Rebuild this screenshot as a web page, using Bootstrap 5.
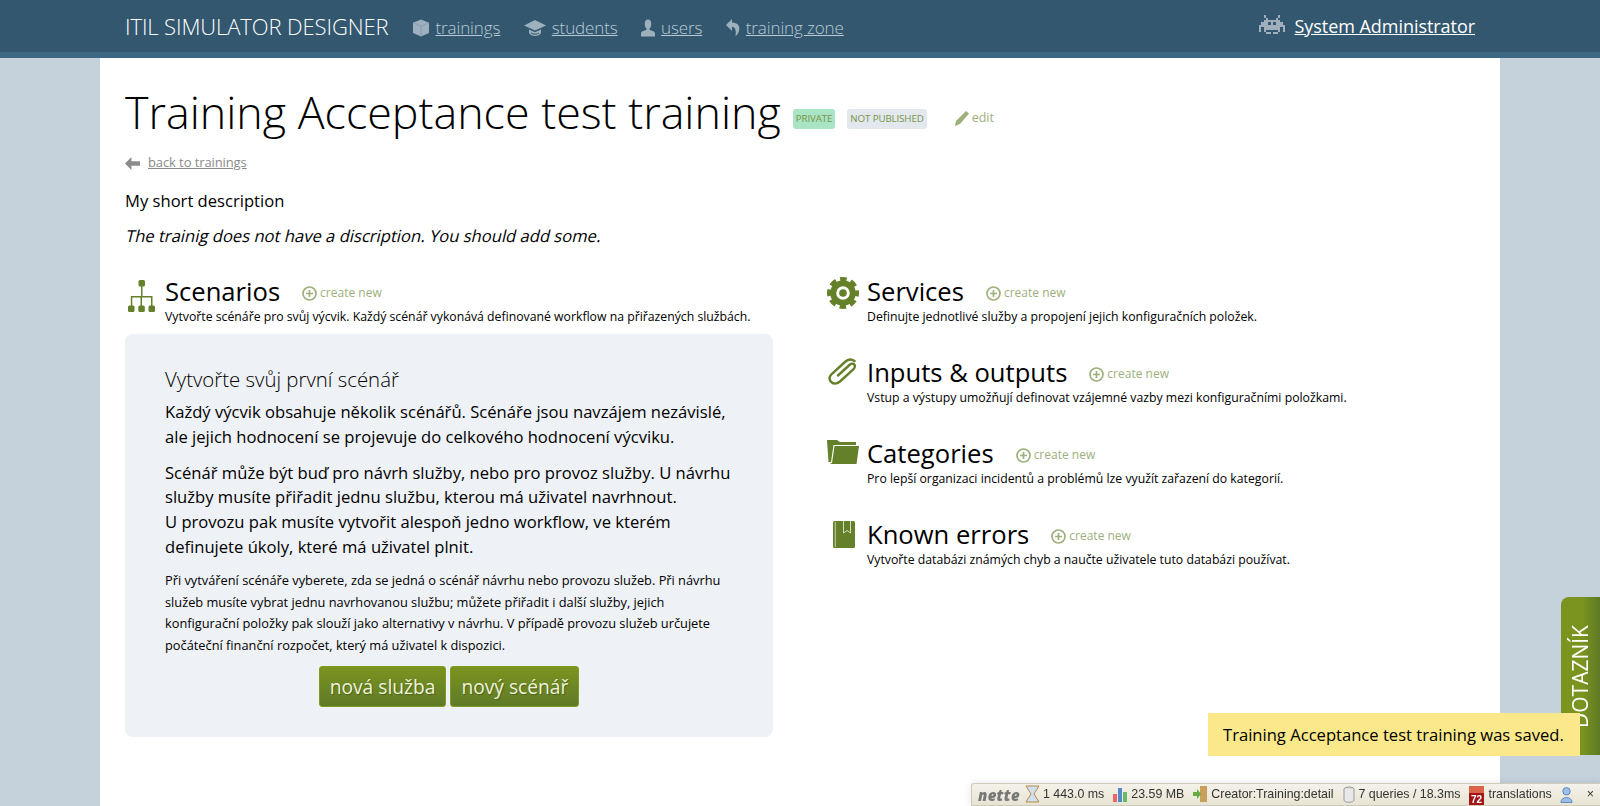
<!DOCTYPE html>
<html lang="en">
<head>
<meta charset="utf-8">
<title>ITIL Simulator Designer</title>
<link href="https://cdn.jsdelivr.net/npm/bootstrap@5.3.0/dist/css/bootstrap.min.css" rel="stylesheet">
<style>
html,body{height:100%}
body{background:#c5d1db;font-family:"Open Sans",sans-serif;color:#000;overflow:hidden}
.topbar{background:#33576e;border-bottom:6px solid #3d6883;height:58px;padding:0 125px}
.brand-name{font-weight:300;font-size:22px;color:#fff;margin-right:23px;line-height:52px;letter-spacing:-.1px}
.top-link{font-weight:300;font-size:17px;color:#b9cad6;margin-right:23.500px;letter-spacing:-.12px;display:flex;align-items:center;gap:6px;position:relative;top:2px}
.top-link a{color:#b9cad6}
.top-link svg{fill:#9db0bd}
.user-link{font-weight:400;font-size:18px;color:#fff;display:flex;align-items:center;gap:10px;letter-spacing:-.05px}
.user-link a{color:#fff}
.sheet{width:1400px;margin:0 auto;background:#fff;padding:0 25px;height:748px}
.title-row{height:85px;padding-top:22px}
.page-title{font-weight:300;font-size:44.800px;line-height:63px;margin:0}
.state-tag{font-size:9.800px;line-height:20px;height:20px;padding:0 3px;border-radius:3px;color:#7a9448;letter-spacing:-.15px;white-space:nowrap;margin-top:14px}
.tag-private{background:#a9e5c4;margin-left:12px}
.tag-draft{background:#e2e8ee;margin-left:12px}
.edit-link{color:#9db07c;font-size:12.500px;margin-left:28px;display:flex;align-items:center;gap:3px;margin-top:14px}
.back-row{font-size:13px;color:#8b8b8b;height:18px;margin-top:11px;font-weight:400}
.back-row a{color:#8b8b8b;letter-spacing:-.1px}
.short-desc{font-size:16.600px;margin-top:17px;line-height:24px;margin-bottom:0}
.long-desc{font-size:16.600px;margin-top:11px;line-height:24px;margin-bottom:0}
.slant-text{display:inline-block;transform:skewX(-13deg);transform-origin:0 75%}
.cols{margin-top:27px;display:grid;grid-template-columns:648px 1fr;column-gap:53px}
.sect{display:flex;position:relative;padding-left:40px;height:81px}
.sect-wide{padding-left:41px}
.sect-auto{height:auto}
.sect-ico{position:absolute;fill:#648028}
.ico-tree{left:3px;top:5px;width:27px;height:32px}
.ico-gear{left:1px;top:2px;width:32px;height:32px}
.ico-clip{left:2px;top:2px;width:29px;height:27px}
.ico-folder{left:1px;top:3px;width:32px;height:24px}
.ico-book{left:7px;top:3px;width:22px;height:27px}
.sect-head{display:flex;align-items:center;height:32px}
.sect-head h2{font-size:25.600px;font-weight:400;margin:0;line-height:32px;position:relative;top:1px}
.create-link{color:#9db07c;font-size:12px;display:flex;align-items:center;gap:3px;margin-left:22px;position:relative;top:2px}
.sect-note{font-size:12.250px;line-height:16px;margin:2px 0 0}
.intro-box{background:#eef1f5;border-radius:8px;padding:32px 40px 0;height:403px;margin-top:9px}
.intro-box h3{font-size:20.400px;font-weight:300;line-height:26px;margin:0 0 8px}
.intro-big{font-size:16.600px;line-height:24.800px;margin:0 0 11px}
.intro-small{font-size:12.800px;line-height:21.800px;margin:-1px 0 9px}
.btn-olive{background:linear-gradient(#7b9420,#5f7a28);border:1px solid #7f9a1d;border-radius:3px;color:#eef3d8;font-size:19.200px;line-height:25px;padding:7px 10px;font-weight:400;text-shadow:1px 1px 1px rgba(0,0,0,.25)}
.btn-olive:hover{color:#fff;background:#5f7a28}
.dotaz{position:fixed;left:1561px;top:597px;width:39px;height:158px;background:linear-gradient(90deg,#7b931f,#7b931f 55%,#5e7a26);border-radius:8px 0 0 0;overflow:hidden}
.dotaz span{position:absolute;left:0;top:30px;height:101px;width:39px;color:#fff;font-size:21px;writing-mode:vertical-rl;transform:rotate(180deg);line-height:39px;white-space:nowrap}
.flash-note{position:fixed;left:1208px;top:713px;width:372px;height:43px;background:#fbe88a;font-size:16.600px;line-height:43px;padding-left:15px;white-space:nowrap}
.debug-bar{position:fixed;left:971px;top:783px;right:0;height:23px;background:linear-gradient(#f4f2e9,#e8e4d4);border:1px solid #cfcbbb;border-right:0;border-radius:3px 0 0 0;box-shadow:0 0 8px rgba(0,0,0,.1);font-family:"Liberation Sans",sans-serif;font-size:12.400px;color:#333;display:flex;align-items:center;white-space:nowrap;padding-left:6px}
.nette-mark{font:italic 800 15px "Open Sans",sans-serif;color:#777;width:47px;letter-spacing:.3px}
.dbg-item{display:flex;align-items:center;gap:3px;margin-right:8px}
.dbg-gap{margin-right:14px}
</style>
</head>
<body>
<nav class="topbar d-flex align-items-center justify-content-between">
  <div class="d-flex align-items-center">
    <span class="brand-name">ITIL SIMULATOR DESIGNER</span>
    <span class="top-link"><svg width="18" height="18" viewBox="0 0 18 18"><path d="M9 .5l8 3.200v10.300l-8 3.500-8-3.500V3.700z"/><path d="M1 3.700l8 3.600 8-3.600M9 7.300v10" fill="none" stroke="#7f97a7" stroke-width=".7"/></svg><a href="#">trainings</a></span>
    <span class="top-link"><svg width="22" height="17" viewBox="0 0 22 17"><path d="M11 0L0 5.500l11 5 11-5zM5 9.500v3.500c2 4 10 4 12 0V9.500l-6 2.800z"/><path d="M7 13c2 1.500 6 1.500 8 0" fill="none" stroke="#33576e" stroke-width="1"/></svg><a href="#">students</a></span>
    <span class="top-link"><svg width="14" height="18" viewBox="0 0 15 18"><path d="M7.500 0C5 0 4 2 4 5c0 2 1 4 2 4.800V11C4 12 0 12.500 0 15v3h15v-3c0-2.500-4-3-6-4V9.800c1-.8 2-2.800 2-4.800 0-3-1-5-3.500-5z"/></svg><a href="#">users</a></span>
    <span class="top-link"><svg width="14" height="18" viewBox="0 0 14 18"><path d="M6 0L0 6l6 6V8c3 0 4.500 2.500 3.500 9.500C13 14 14 10.500 13 7.500 12 4.500 9 3.500 6 3.500z"/></svg><a href="#">training zone</a></span>
  </div>
  <span class="user-link"><svg width="26" height="22" viewBox="0 0 11 9" fill="#9fb0bc" shape-rendering="crispEdges"><path d="M2 0h1v1h1v1h3V1h1V0h1v1H8v1h1v1h1v1h1v3h-1V5H9v2H8v1H6V7h2V6H3v1h2v1H3V7H2V5H1v2H0V4h1V3h1V2h1V1H2zM4 3v1h1V3zM6 3v1h1V3z" fill-rule="evenodd"/></svg><a href="#">System Administrator</a></span>
</nav>

<main class="sheet">
  <div class="title-row d-flex align-items-center">
    <h1 class="page-title">Training Acceptance test training</h1>
    <span class="state-tag tag-private">PRIVATE</span>
    <span class="state-tag tag-draft">NOT PUBLISHED</span>
    <span class="edit-link"><svg width="14" height="15" viewBox="0 0 14 15" fill="#9db07c"><path d="M11 0l3 2.500L5 13l-5 2 1-5z"/></svg>edit</span>
  </div>
  <div class="back-row d-flex align-items-center gap-1"><svg width="15" height="13" viewBox="0 0 14 12" fill="#8b8b8b" class="me-1"><path d="M6 0v4h8v4H6v4L0 6z"/></svg><a href="#">back to trainings</a></div>
  <p class="short-desc">My short description</p>
  <p class="long-desc"><span class="slant-text">The trainig does not have a discription. You should add some.</span></p>

  <div class="cols">
    <section>
      <div class="sect sect-auto">
        <svg class="sect-ico ico-tree" viewBox="0 0 27 32"><rect x="10.500" width="6.500" height="6.500" rx="1.500"/><rect x="0" y="25.500" width="6.500" height="6.500" rx="1.500"/><rect x="10.300" y="25.500" width="6.500" height="6.500" rx="1.500"/><rect x="20.500" y="25.500" width="6.500" height="6.500" rx="1.500"/><path d="M13 6h1.500v10h10v10h-1.500v-8.500h-9V26H12.500v-8.500H4.300V26H2.800V16H13z"/></svg>
        <div>
          <div class="sect-head"><h2>Scenarios</h2><a class="create-link text-decoration-none" href="#"><svg width="15" height="15" viewBox="0 0 15 15"><circle cx="7.500" cy="7.500" r="6.500" fill="none" stroke="#9db07c" stroke-width="1.700"/><path d="M7.500 4v7M4 7.500h7" stroke="#9db07c" stroke-width="1.700"/></svg>create new</a></div>
          <p class="sect-note">Vytvořte scénáře pro svůj výcvik. Každý scénář vykonává definované workflow na přiřazených službách.</p>
        </div>
      </div>
      <div class="intro-box">
        <h3>Vytvořte svůj první scénář</h3>
        <p class="intro-big">Každý výcvik obsahuje několik scénářů. Scénáře jsou navzájem nezávislé, ale jejich hodnocení se projevuje do celkového hodnocení výcviku.</p>
        <p class="intro-big">Scénář může být buď pro návrh služby, nebo pro provoz služby. U návrhu služby musíte přiřadit jednu službu, kterou má uživatel navrhnout.<br>U provozu pak musíte vytvořit alespoň jedno workflow, ve kterém definujete úkoly, které má uživatel plnit.</p>
        <p class="intro-small">Při vytváření scénáře vyberete, zda se jedná o scénář návrhu nebo provozu služeb. Při návrhu služeb musíte vybrat jednu navrhovanou službu; můžete přiřadit i další služby, jejich konfigurační položky pak slouží jako alternativy v návrhu. V případě provozu služeb určujete počáteční finanční rozpočet, který má uživatel k dispozici.</p>
        <div class="d-flex justify-content-center gap-1"><button class="btn btn-olive" type="button">nová služba</button><button class="btn btn-olive" type="button">nový scénář</button></div>
      </div>
    </section>
    <section>
      <div class="sect sect-wide">
        <svg class="sect-ico ico-gear" viewBox="0 0 32 32"><circle cx="16" cy="16" r="13.500" fill="none" stroke="#648028" stroke-width="5" stroke-dasharray="6.400 4.200" stroke-dashoffset="3.200"/><circle cx="16" cy="16" r="9.800" fill="none" stroke="#648028" stroke-width="6"/><circle cx="16" cy="16" r="3.800"/></svg>
        <div>
          <div class="sect-head"><h2>Services</h2><a class="create-link text-decoration-none" href="#"><svg width="15" height="15" viewBox="0 0 15 15"><circle cx="7.500" cy="7.500" r="6.500" fill="none" stroke="#9db07c" stroke-width="1.700"/><path d="M7.500 4v7M4 7.500h7" stroke="#9db07c" stroke-width="1.700"/></svg>create new</a></div>
          <p class="sect-note">Definujte jednotlivé služby a propojení jejich konfiguračních položek.</p>
        </div>
      </div>
      <div class="sect sect-wide">
        <svg class="sect-ico ico-clip" viewBox="0 0 29 27" fill="none"><path d="M10 17.500L22 6.500c2-1.800 4.500-.5 4.800 1 .3 1.500-.3 2.800-1.500 4L12 23.500c-3 2.500-6.500 2.500-8.800.5-2.200-2.500-2-5.500.5-8L17.500 3.500c3-2.500 6.500-2.300 9-.5" style="fill:none;stroke:#648028;stroke-width:2.400;stroke-linecap:round"/></svg>
        <div>
          <div class="sect-head"><h2>Inputs &amp; outputs</h2><a class="create-link text-decoration-none" href="#"><svg width="15" height="15" viewBox="0 0 15 15"><circle cx="7.500" cy="7.500" r="6.500" fill="none" stroke="#9db07c" stroke-width="1.700"/><path d="M7.500 4v7M4 7.500h7" stroke="#9db07c" stroke-width="1.700"/></svg>create new</a></div>
          <p class="sect-note">Vstup a výstupy umožňují definovat vzájemné vazby mezi konfiguračními položkami.</p>
        </div>
      </div>
      <div class="sect sect-wide">
        <svg class="sect-ico ico-folder" viewBox="0 0 32 24"><path d="M0 0h10l3 2h16v3H6.500L4 22H1.500z"/><path d="M7.500 6H32l-2.500 18H2.500l2.500-1z"/></svg>
        <div>
          <div class="sect-head"><h2>Categories</h2><a class="create-link text-decoration-none" href="#"><svg width="15" height="15" viewBox="0 0 15 15"><circle cx="7.500" cy="7.500" r="6.500" fill="none" stroke="#9db07c" stroke-width="1.700"/><path d="M7.500 4v7M4 7.500h7" stroke="#9db07c" stroke-width="1.700"/></svg>create new</a></div>
          <p class="sect-note">Pro lepší organizaci incidentů a problémů lze využít zařazení do kategorií.</p>
        </div>
      </div>
      <div class="sect sect-wide">
        <svg class="sect-ico ico-book" viewBox="0 0 22 27"><rect width="22" height="27" rx="1.500"/><path d="M2.300 1v25" stroke="#dfe6cf" stroke-width=".8"/><path d="M10.500 0v12l3.500-2.500 3.500 2.500V0" fill="none" stroke="#dfe6cf" stroke-width=".9"/></svg>
        <div>
          <div class="sect-head"><h2>Known errors</h2><a class="create-link text-decoration-none" href="#"><svg width="15" height="15" viewBox="0 0 15 15"><circle cx="7.500" cy="7.500" r="6.500" fill="none" stroke="#9db07c" stroke-width="1.700"/><path d="M7.500 4v7M4 7.500h7" stroke="#9db07c" stroke-width="1.700"/></svg>create new</a></div>
          <p class="sect-note">Vytvořte databázi známých chyb a naučte uživatele tuto databázi používat.</p>
        </div>
      </div>
    </section>
  </div>
</main>

<a class="dotaz text-decoration-none" href="#"><span>DOTAZNÍK</span></a>
<div class="flash-note">Training Acceptance test training was saved.</div>
<div class="debug-bar">
  <span class="nette-mark">nette</span>
  <span class="dbg-item"><svg width="15" height="18" viewBox="0 0 15 18"><path d="M1 1h13L9 9l5 8H1l5-8z" fill="#cfe0ee" stroke="#b8894a"/></svg>1 443.0 ms</span>
  <span class="dbg-item"><svg width="16" height="17" viewBox="0 0 16 17"><path d="M1 8h4v8H1z" fill="#e66"/><path d="M6 2h4v14H6z" fill="#58c"/><path d="M11 6h4v10h-4z" fill="#6b6"/></svg>23.59 MB</span>
  <span class="dbg-item"><svg width="16" height="18" viewBox="0 0 16 18"><path d="M8 1h7v16H8z" fill="#c9a05a"/><path d="M1 7h4V4l4 5-4 5v-3H1z" fill="#6a4"/></svg>Creator:Training:detail</span>
  <span class="dbg-item"><svg width="14" height="17" viewBox="0 0 14 17"><ellipse cx="7" cy="3" rx="5" ry="2" fill="#ddd" stroke="#999"/><path d="M2 3v11c0 3 10 3 10 0V3" fill="#e8e8e8" stroke="#999"/></svg>7 queries / 18.3ms</span>
  <span class="dbg-item"><svg width="17" height="20" viewBox="0 0 17 20"><path d="M1 1h15v8H1z" fill="#d9654a"/><path d="M1 8h15v12H1z" fill="#a31515"/><text x="8.500" y="18" font-size="10" font-weight="bold" fill="#fff" text-anchor="middle" font-family="Liberation Sans">72</text></svg>translations</span>
  <span class="dbg-item dbg-gap"><svg width="13" height="18" viewBox="0 0 14 18"><circle cx="7" cy="5" r="4" fill="#9cc0ea" stroke="#5a82b8"/><path d="M1 17c0-7 12-7 12 0z" fill="#9cc0ea" stroke="#5a82b8"/></svg></span>
  <span>×</span>
</div>
</body>
</html>
